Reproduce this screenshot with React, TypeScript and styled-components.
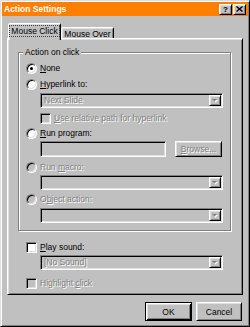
import React from "react";
import styled, { createGlobalStyle, css } from "styled-components";

const GlobalStyle = createGlobalStyle`
  html, body {
    margin: 0;
    padding: 0;
    background: #c0c0c0;
  }
  body {
    font-family: "Liberation Sans", Arial, sans-serif;
    font-size: 8.5px;
    color: #000;
  }
`;

const raised = css`
  border: 1px solid;
  border-color: #fff #000 #000 #fff;
  box-shadow: inset 1px 1px #dfdfdf, inset -1px -1px #808080;
`;

const sunken = css`
  border: 1px solid;
  border-color: #808080 #fff #fff #808080;
  box-shadow: inset 1px 1px #000, inset -1px -1px #dfdfdf;
`;

const greyed = css`
  color: #808080;
  text-shadow: 1px 1px #fff;
`;

const Window = styled.div`
  width: 250px;
  height: 327px;
  box-sizing: border-box;
  border: 1px solid;
  border-color: #dfdfdf #000 #000 #dfdfdf;
  box-shadow: inset 1px 1px #fff, inset -1px -1px #808080;
  padding: 1px;
  background: #c0c0c0;
  display: flex;
  flex-direction: column;
`;

const TitleBar = styled.div`
  height: 14px;
  background: #ff8000;
  display: flex;
  align-items: center;
  padding: 0 2px 0 2px;
`;

const Title = styled.span`
  color: #fff;
  font-weight: bold;
  flex: 1;
  line-height: 14px;
`;

const TitleButton = styled.span`
  ${raised};
  box-sizing: border-box;
  width: 13px;
  height: 11px;
  margin-left: 1px;
  background: #c0c0c0;
  display: flex;
  align-items: center;
  justify-content: center;
  font-weight: bold;
  font-size: 8px;
  line-height: 9px;
`;

const Body = styled.div`
  padding: 7px 5px 0 5px;
  display: flex;
  flex-direction: column;
`;

const TabRow = styled.div`
  display: flex;
  align-items: flex-end;
  height: 17px;
  margin-bottom: -2px;
  padding-left: 1px;
`;

const Tab = styled.div<{ $active?: boolean }>`
  box-sizing: border-box;
  width: 53px;
  height: ${(p) => (p.$active ? 17 : 13)}px;
  padding-bottom: ${(p) => (p.$active ? 2 : 0)}px;
  border: 1px solid;
  border-bottom: none;
  border-color: #fff #000 transparent #fff;
  border-radius: 2px 2px 0 0;
  box-shadow: inset 1px 1px #dfdfdf, inset -1px 0 #808080;
  background: #c0c0c0;
  display: flex;
  align-items: center;
  justify-content: center;
  position: relative;
  z-index: ${(p) => (p.$active ? 2 : 0)};
`;

const TabLabel = styled.span<{ $focus?: boolean }>`
  padding: 0 1px;
  line-height: 10px;
  outline: ${(p) => (p.$focus ? "1px dotted #404040" : "none")};
`;

const Panel = styled.div`
  ${raised};
  position: relative;
  z-index: 1;
  background: #c0c0c0;
  display: flex;
  flex-direction: column;
  padding: 0 11px 5px 10px;
`;

const Group = styled.div`
  position: relative;
  margin-top: 13px;
  border: 1px solid #808080;
  box-shadow: inset 1px 1px #fff, 1px 1px #fff;
  padding: 10px 7px 7px 7px;
  display: flex;
  flex-direction: column;
`;

const Legend = styled.span`
  position: absolute;
  top: -6px;
  left: 4px;
  padding: 0 2px;
  background: #c0c0c0;
  line-height: 11px;
`;

const SoundSection = styled.div`
  display: flex;
  flex-direction: column;
  padding: 0 8px 0 8px;
`;

const OptionRow = styled.div<{ $gap?: number; $disabled?: boolean }>`
  display: flex;
  align-items: center;
  gap: 3px;
  height: 11px;
  line-height: 11px;
  margin-top: ${(p) => p.$gap ?? 0}px;
  ${(p) => p.$disabled && greyed};
`;

const Indented = styled.div<{ $gap?: number }>`
  margin-left: 14px;
  margin-top: ${(p) => p.$gap ?? 0}px;
  display: flex;
  gap: 9px;
`;

const Radio = styled.span<{ $disabled?: boolean }>`
  ${sunken};
  box-sizing: border-box;
  width: 11px;
  height: 11px;
  flex: none;
  border-radius: 50%;
  background: ${(p) => (p.$disabled ? "#c0c0c0" : "#fff")};
  display: flex;
  align-items: center;
  justify-content: center;
`;

const Dot = styled.span`
  width: 3px;
  height: 3px;
  border-radius: 50%;
  background: #000;
`;

const Check = styled.span<{ $disabled?: boolean }>`
  ${sunken};
  box-sizing: border-box;
  width: 11px;
  height: 11px;
  flex: none;
  background: ${(p) => (p.$disabled ? "#c0c0c0" : "#fff")};
`;

const Key = styled.span`
  text-decoration: underline;
`;

const Combo = styled.div`
  ${sunken};
  box-sizing: border-box;
  flex: 1;
  height: 15px;
  padding: 1px;
  background: #c0c0c0;
  display: flex;
  align-items: center;
`;

const ComboText = styled.span`
  ${greyed};
  flex: 1;
  padding-left: 2px;
  line-height: 11px;
`;

const ArrowButton = styled.span`
  ${raised};
  box-sizing: border-box;
  width: 12px;
  height: 11px;
  background: #c0c0c0;
  display: flex;
  align-items: center;
  justify-content: center;
`;

const Field = styled.div`
  ${sunken};
  box-sizing: border-box;
  flex: 1;
  height: 16px;
  background: #c0c0c0;
`;

const Button = styled.div<{ $default?: boolean; $width: number; $disabled?: boolean }>`
  box-sizing: border-box;
  width: ${(p) => p.$width}px;
  background: #c0c0c0;
  display: flex;
  align-items: center;
  justify-content: center;
  ${(p) =>
    p.$default
      ? css`
          border: 1px solid #000;
          box-shadow: inset 1px 1px #fff, inset -1px -1px #000,
            inset 2px 2px #dfdfdf, inset -2px -2px #808080;
        `
      : raised};
  ${(p) => p.$disabled && greyed};
`;

const BrowseButton = styled(Button)`
  height: 16px;
  margin-right: 1px;
`;

const Footer = styled.div`
  display: flex;
  justify-content: flex-end;
  gap: 4px;
  margin-top: 7px;
  padding-right: 1px;
`;

const DialogButton = styled(Button)`
  height: 19px;
`;

const Arrow: React.FC = () => (
  <svg width="7" height="5" viewBox="0 0 7 5">
    <path d="M1 2h5l-2.5 2.5z" fill="#fff" />
    <path d="M0 1h5l-2.5 2.5z" fill="#808080" />
  </svg>
);

const CloseGlyph: React.FC = () => (
  <svg width="7" height="6" viewBox="0 0 7 6">
    <path d="M0.5 0.5l6 5M6.5 0.5l-6 5" stroke="#000" strokeWidth="1.4" />
  </svg>
);

const Dropdown: React.FC<{ text?: string }> = ({ text }) => (
  <Combo>
    <ComboText>{text}</ComboText>
    <ArrowButton>
      <Arrow />
    </ArrowButton>
  </Combo>
);

const App: React.FC = () => {
  return (
    <>
      <GlobalStyle />
      <Window>
        <TitleBar>
          <Title>Action Settings</Title>
          <TitleButton>?</TitleButton>
          <TitleButton>
            <CloseGlyph />
          </TitleButton>
        </TitleBar>

        <Body>
          <TabRow>
            <Tab $active>
              <TabLabel $focus>Mouse Click</TabLabel>
            </Tab>
            <Tab>
              <TabLabel>Mouse Over</TabLabel>
            </Tab>
          </TabRow>

          <Panel>
            <Group>
              <Legend>Action on click</Legend>

              <OptionRow>
                <Radio>
                  <Dot />
                </Radio>
                <span>
                  <Key>N</Key>one
                </span>
              </OptionRow>

              <OptionRow $gap={5}>
                <Radio />
                <span>
                  <Key>H</Key>yperlink to:
                </span>
              </OptionRow>
              <Indented $gap={3}>
                <Dropdown text="Next Slide" />
              </Indented>
              <Indented $gap={5}>
                <OptionRow $disabled>
                  <Check $disabled />
                  <span>
                    <Key>U</Key>se relative path for hyperlink
                  </span>
                </OptionRow>
              </Indented>

              <OptionRow $gap={4}>
                <Radio />
                <span>
                  <Key>R</Key>un program:
                </span>
              </OptionRow>
              <Indented $gap={2}>
                <Field />
                <BrowseButton $width={47} $disabled>
                  <span>
                    <Key>B</Key>rowse...
                  </span>
                </BrowseButton>
              </Indented>

              <OptionRow $gap={5} $disabled>
                <Radio $disabled />
                <span>
                  Run <Key>m</Key>acro:
                </span>
              </OptionRow>
              <Indented $gap={2}>
                <Dropdown />
              </Indented>

              <OptionRow $gap={4} $disabled>
                <Radio $disabled />
                <span>
                  O<Key>b</Key>ject action:
                </span>
              </OptionRow>
              <Indented $gap={3}>
                <Dropdown />
              </Indented>
            </Group>

            <SoundSection>
              <OptionRow $gap={11}>
                <Check />
                <span>
                  <Key>P</Key>lay sound:
                </span>
              </OptionRow>
              <Indented $gap={2}>
                <Dropdown text="[No Sound]" />
              </Indented>
              <OptionRow $gap={8} $disabled>
                <Check $disabled />
                <span>
                  Highlight <Key>c</Key>lick
                </span>
              </OptionRow>
            </SoundSection>
          </Panel>

          <Footer>
            <DialogButton $default $width={47}>
              OK
            </DialogButton>
            <DialogButton $width={46}>Cancel</DialogButton>
          </Footer>
        </Body>
      </Window>
    </>
  );
};

export default App;
